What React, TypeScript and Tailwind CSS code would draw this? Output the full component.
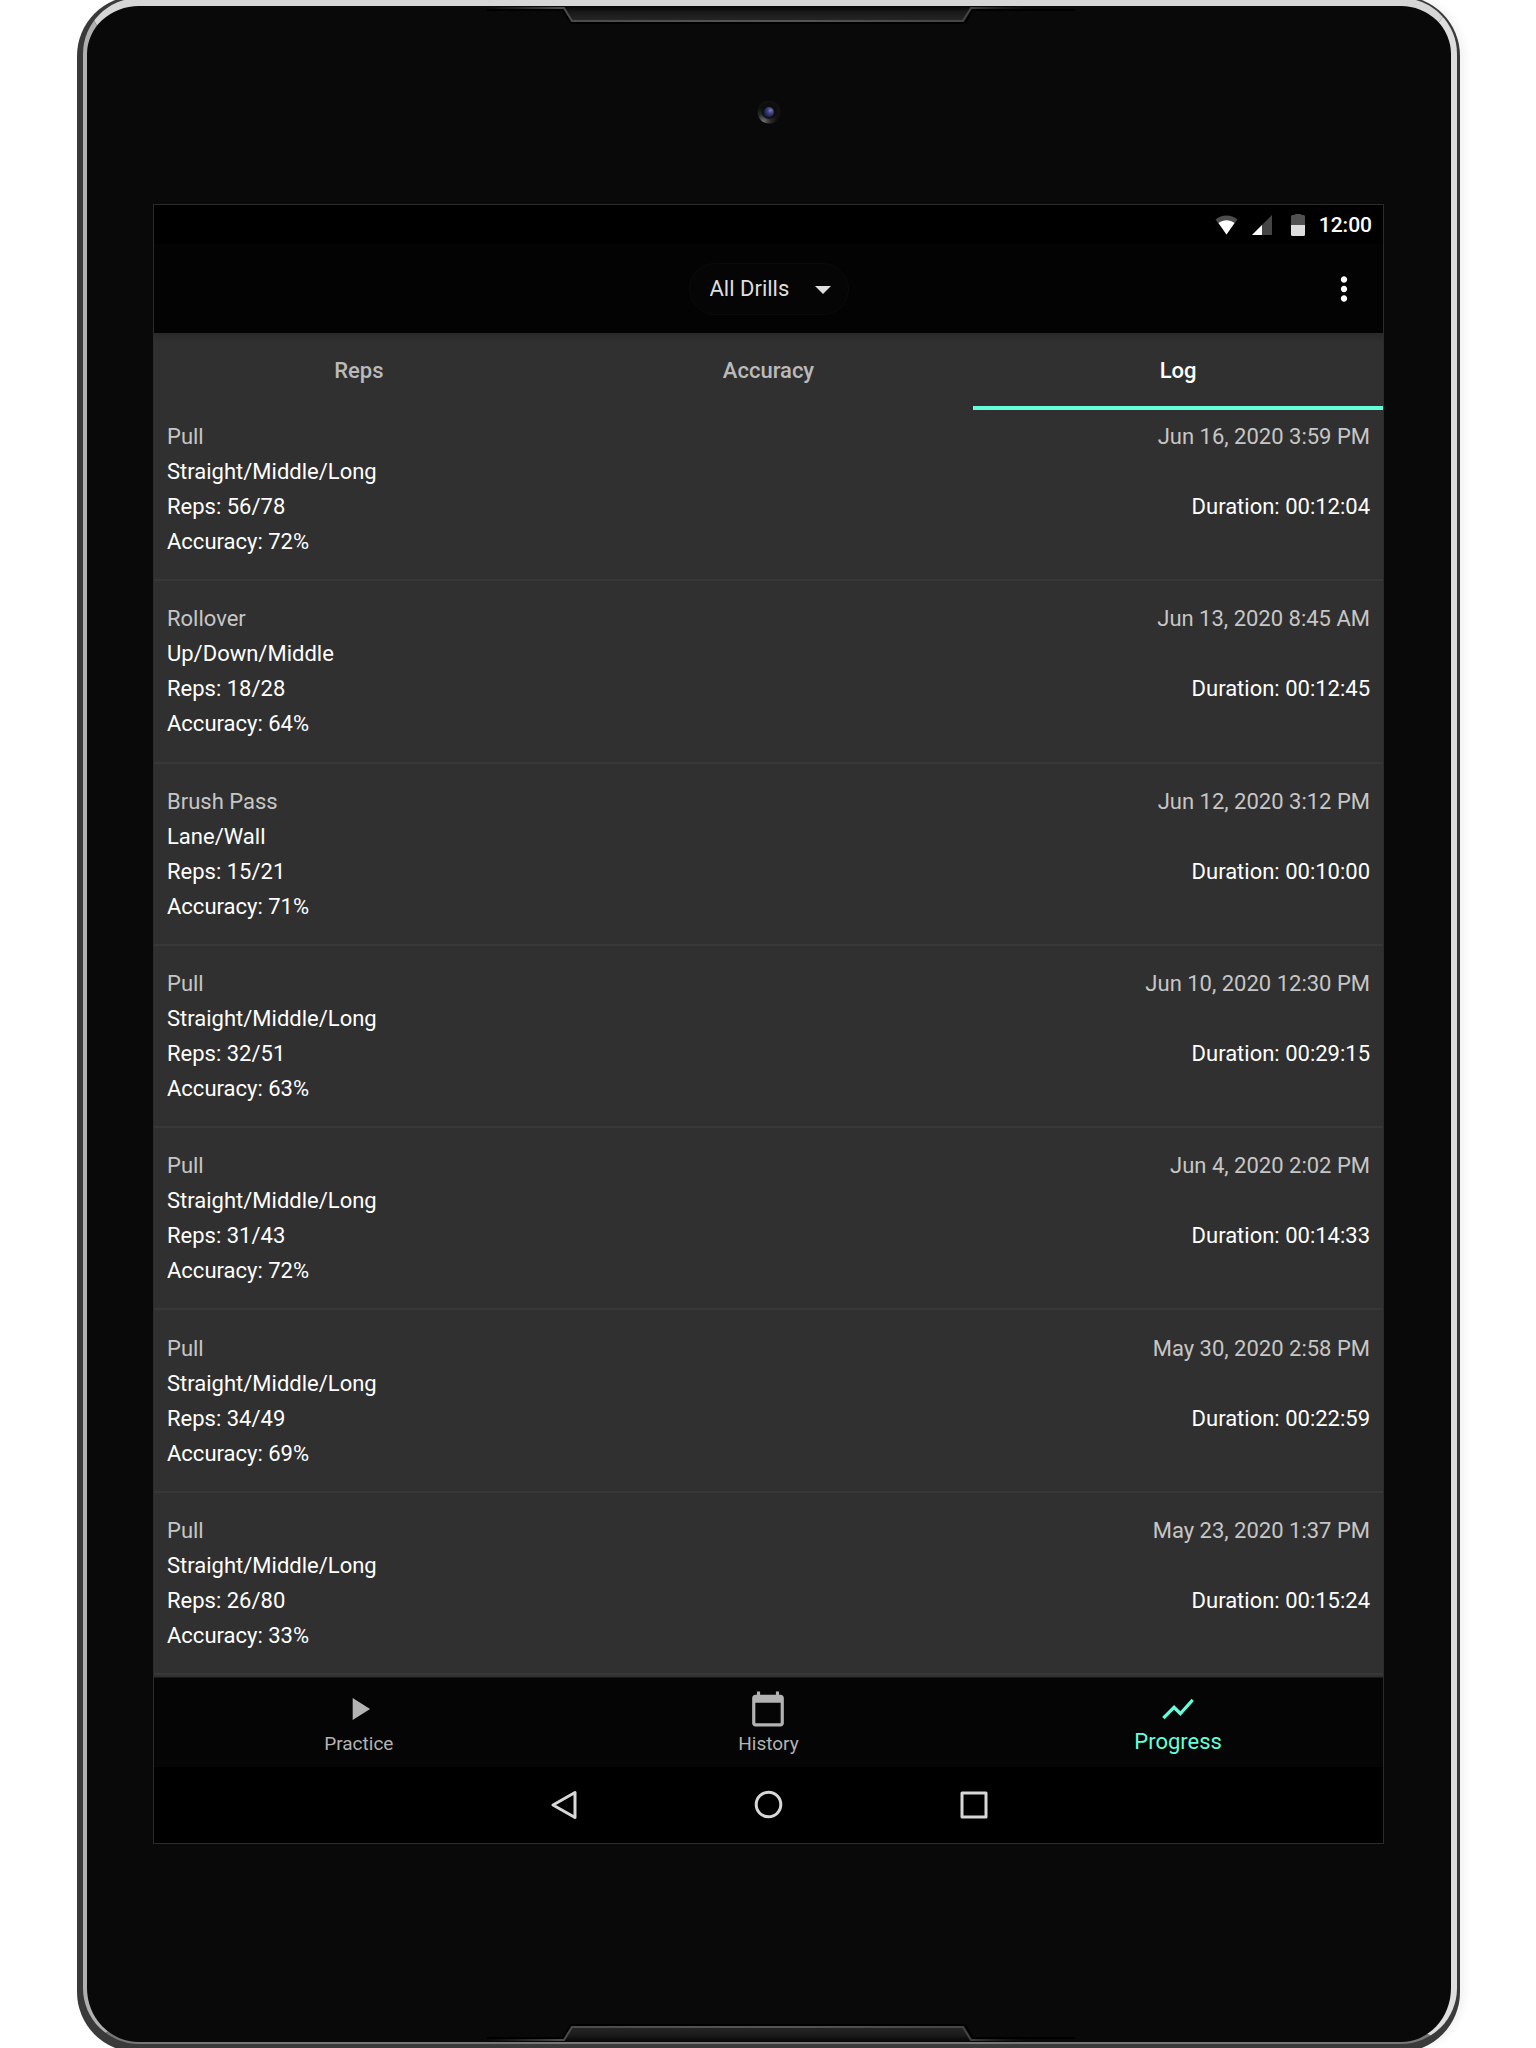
import { useState } from "react";
import { MdPlayArrow, MdCalendarToday, MdShowChart, MdMoreVert } from "react-icons/md";

type Entry = {
  drill: string;
  detail: string;
  reps: string;
  accuracy: string;
  date: string;
  duration: string;
};

const entries: Entry[] = [
  { drill: "Pull", detail: "Straight/Middle/Long", reps: "56/78", accuracy: "72%", date: "Jun 16, 2020 3:59 PM", duration: "00:12:04" },
  { drill: "Rollover", detail: "Up/Down/Middle", reps: "18/28", accuracy: "64%", date: "Jun 13, 2020 8:45 AM", duration: "00:12:45" },
  { drill: "Brush Pass", detail: "Lane/Wall", reps: "15/21", accuracy: "71%", date: "Jun 12, 2020 3:12 PM", duration: "00:10:00" },
  { drill: "Pull", detail: "Straight/Middle/Long", reps: "32/51", accuracy: "63%", date: "Jun 10, 2020 12:30 PM", duration: "00:29:15" },
  { drill: "Pull", detail: "Straight/Middle/Long", reps: "31/43", accuracy: "72%", date: "Jun 4, 2020 2:02 PM", duration: "00:14:33" },
  { drill: "Pull", detail: "Straight/Middle/Long", reps: "34/49", accuracy: "69%", date: "May 30, 2020 2:58 PM", duration: "00:22:59" },
  { drill: "Pull", detail: "Straight/Middle/Long", reps: "26/80", accuracy: "33%", date: "May 23, 2020 1:37 PM", duration: "00:15:24" },
];

function SpeakerNotch({ id }: { id: string }) {
  return (
    <svg width="588" height="18" viewBox="0 0 588 18" fill="none" aria-hidden="true">
      <defs>
        <linearGradient id={`${id}-line`} x1="0" x2="588" y1="0" y2="0" gradientUnits="userSpaceOnUse">
          <stop offset="0" stopColor="#3a3a3a" stopOpacity="0" />
          <stop offset="0.12" stopColor="#4a4a4a" />
          <stop offset="0.5" stopColor="#555555" />
          <stop offset="0.82" stopColor="#444444" />
          <stop offset="0.92" stopColor="#222222" stopOpacity="0" />
        </linearGradient>
        <linearGradient id={`${id}-fill`} x1="0" x2="0" y1="0" y2="1">
          <stop offset="0" stopColor="#080808" />
          <stop offset="0.4" stopColor="#1a1a1a" />
          <stop offset="1" stopColor="#262626" />
        </linearGradient>
      </defs>
      <path d="M77 1L85 15H476L484 1Z" fill={`url(#${id}-fill)`} />
      <path d="M0 4H76L84 17H478L486 4H588" stroke="#000000" strokeWidth="2" />
      <path d="M0 2H77L85 15H476L484 2H588" stroke={`url(#${id}-line)`} strokeWidth="2" />
    </svg>
  );
}

function Camera() {
  return (
    <svg width="24" height="24" viewBox="0 0 24 24" aria-hidden="true">
      <defs>
        <radialGradient id="cam-rim" cx="0.25" cy="0.9" r="0.6">
          <stop offset="0" stopColor="#707070" />
          <stop offset="0.5" stopColor="#2c2c2c" />
          <stop offset="1" stopColor="#111111" />
        </radialGradient>
        <radialGradient id="cam-lens" cx="0.65" cy="0.35" r="0.7">
          <stop offset="0" stopColor="#7f7ab8" />
          <stop offset="0.45" stopColor="#3b3f7c" />
          <stop offset="1" stopColor="#1a1e48" />
        </radialGradient>
      </defs>
      <circle cx="12" cy="12" r="11.5" fill="url(#cam-rim)" />
      <circle cx="12" cy="11" r="8" fill="#0c0c0e" fillOpacity="0.75" />
      <circle cx="12" cy="12" r="5" fill="url(#cam-lens)" />
    </svg>
  );
}

function StatusBar() {
  return (
    <div className="flex h-[39px] items-center justify-end bg-black pr-[11px] text-white">
      <svg className="mr-3.5" width="23" height="20" viewBox="0 0 23 20" aria-label="Wi-Fi" role="img">
        <path d="M0.5 4.5C7 -0.8 16 -0.8 22.5 4.5L11.5 19.5Z" fill="#4d4d4d" />
        <path d="M3.5 8C8.5 4.4 14.5 4.4 19.5 8L11.5 19.5Z" fill="#ffffff" />
      </svg>
      <svg className="mr-[19px]" width="20" height="20" viewBox="0 0 20 20" aria-label="Signal" role="img">
        <path d="M20 0V20H0Z" fill="#444444" />
        <path d="M10 10V20H0Z" fill="#ffffff" />
      </svg>
      <svg className="mr-3.5" width="14" height="22" viewBox="0 0 14 22" aria-label="Battery" role="img">
        <path d="M0 11V2.5Q0 1 1.5 1H3.5Q4 0 5 0H9Q10 0 10.5 1H12.5Q14 1 14 2.5V11Z" fill="#515151" />
        <path d="M0 11H14V20.5Q14 22 12.5 22H1.5Q0 22 0 20.5Z" fill="#dedede" />
      </svg>
      <time className="text-[21px] leading-6 font-medium">12:00</time>
    </div>
  );
}

function AppBar() {
  return (
    <header className="grid h-[89px] grid-cols-[1fr_auto_1fr] items-center bg-[#030303] px-5">
      <span />
      <div className="relative">
        <select
          aria-label="Drill filter"
          className="h-[52px] w-40 appearance-none rounded-full border border-[#0b0b0b] bg-[#050505] pl-5 text-[22px] text-[#dedede]"
        >
          <option>All Drills</option>
          <option>Pull</option>
          <option>Rollover</option>
          <option>Brush Pass</option>
        </select>
        <svg className="pointer-events-none absolute top-[23px] right-[18px]" width="16" height="8" viewBox="0 0 16 8" aria-hidden="true">
          <path d="M0 0H16L8 8Z" fill="#dedede" />
        </svg>
      </div>
      <button type="button" aria-label="More options" className="justify-self-end text-white">
        <MdMoreVert size={38} />
      </button>
    </header>
  );
}

const tabs = ["Reps", "Accuracy", "Log"];

function Tabs({ active, onSelect }: { active: string; onSelect: (tab: string) => void }) {
  return (
    <div role="tablist" className="relative z-10 grid h-[77px] grid-cols-3 bg-[linear-gradient(#292929,#303030_10px)]">
      {tabs.map((tab) => (
        <button
          key={tab}
          type="button"
          role="tab"
          aria-selected={tab === active}
          onClick={() => onSelect(tab)}
          className={
            tab === active
              ? "border-b-4 border-[#64ffda] pt-0.5 text-[22px] font-medium text-white"
              : "border-b-4 border-transparent pt-0.5 text-[22px] font-medium text-[#bababa]"
          }
        >
          {tab}
        </button>
      ))}
    </div>
  );
}

function LogRow({ entry }: { entry: Entry }) {
  return (
    <li className="flex flex-1 items-center justify-between border-b-2 border-[#383838] px-[13px] text-[22px] leading-[35px] text-white">
      <div>
        <p className="text-[#c6c6c6]">{entry.drill}</p>
        <p>{entry.detail}</p>
        <p>Reps: {entry.reps}</p>
        <p>Accuracy: {entry.accuracy}</p>
      </div>
      <div className="text-right">
        <p className="h-[70px] text-[#c6c6c6]">{entry.date}</p>
        <p className="h-[70px]">Duration: {entry.duration}</p>
      </div>
    </li>
  );
}

function BottomNav() {
  return (
    <nav className="grid h-[90px] grid-cols-3 border-t border-[#181818] bg-[#050505]">
      <a href="#practice" className="flex flex-col items-center pt-3 text-[19px] leading-8 text-[#b3b3b3]">
        <MdPlayArrow size={38} />
        Practice
      </a>
      <a href="#history" className="flex flex-col items-center pt-3 text-[19px] leading-8 text-[#b3b3b3]">
        <MdCalendarToday size={38} />
        History
      </a>
      <a href="#progress" aria-current="page" className="flex flex-col items-center pt-3 text-[22px] leading-7 text-[#64ffda]">
        <MdShowChart size={38} />
        Progress
      </a>
    </nav>
  );
}

function SystemNav() {
  return (
    <div className="flex h-[76px] items-center justify-center gap-[175px] bg-black">
      <button type="button" aria-label="Back">
        <svg width="30" height="30" viewBox="0 0 30 30" fill="none" stroke="#d8d8d8" strokeWidth="3" strokeLinejoin="round">
          <path d="M26 2.5V27.5L4 15Z" />
        </svg>
      </button>
      <button type="button" aria-label="Home">
        <svg width="30" height="30" viewBox="0 0 30 30" fill="none" stroke="#d8d8d8" strokeWidth="3">
          <circle cx="14.5" cy="14.5" r="12.3" />
        </svg>
      </button>
      <button type="button" aria-label="Recent apps">
        <svg width="30" height="30" viewBox="0 0 30 30" fill="none" stroke="#d8d8d8" strokeWidth="3" strokeLinejoin="round">
          <rect x="3" y="3" width="24" height="24" />
        </svg>
      </button>
    </div>
  );
}

export default function App() {
  const [tab, setTab] = useState("Log");

  return (
    <div className="overflow-hidden bg-white pr-[76px] pl-[77px] font-['Roboto',sans-serif]">
      <div className="-mt-1 -mb-[3px] rounded-[60px] bg-[#3a3a3a] pt-0.5 pr-[3px] pb-2 pl-1.5 shadow-[4px_0_8px_rgba(0,0,0,0.06)]">
        <div className="rounded-[56px] border-t-8 border-r-[6px] border-b-2 border-l-4 border-t-[#d6d6d6] border-r-[#dedede] border-b-[#777777] border-l-[#b0b0b0] bg-[#090909]">
          <div className="relative pr-[67px] pl-[66px]">
            <div className="absolute inset-x-0 top-0 flex justify-center pl-6">
              <SpeakerNotch id="top" />
            </div>
            <div className="flex h-[198px] items-center justify-center pt-3.5">
              <Camera />
            </div>
            <main className="border border-[#2b2b2b] bg-[#303030]">
              <StatusBar />
              <AppBar />
              <Tabs active={tab} onSelect={setTab} />
              <ul className="-mt-[11px] flex min-h-[1278px] flex-col pb-0.5">
                {entries.map((entry) => (
                  <LogRow key={entry.date} entry={entry} />
                ))}
              </ul>
              <BottomNav />
              <SystemNav />
            </main>
            <div className="h-[198px]" />
            <div className="absolute inset-x-0 bottom-0 flex -scale-y-100 justify-center pl-6">
              <SpeakerNotch id="bottom" />
            </div>
          </div>
        </div>
      </div>
    </div>
  );
}
